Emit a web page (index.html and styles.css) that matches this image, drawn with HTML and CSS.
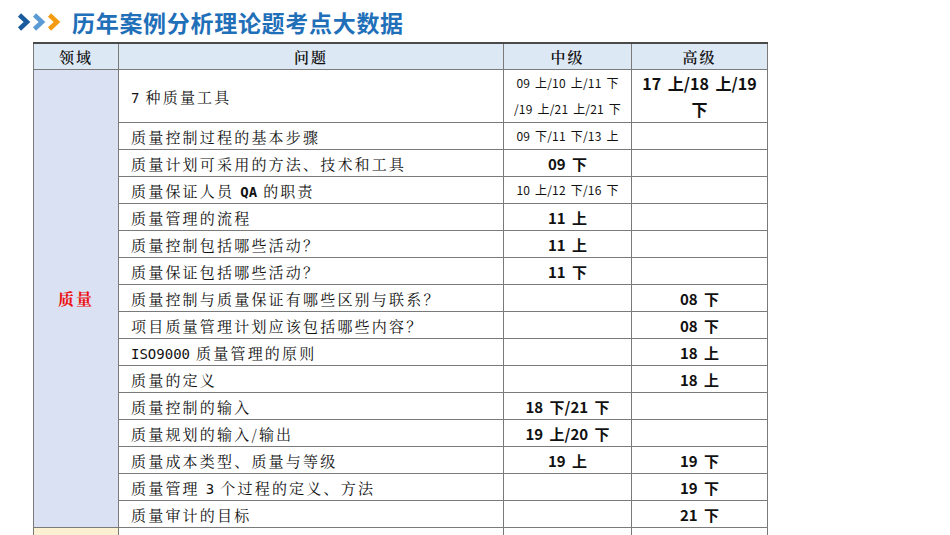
FILE: index.html
```html
<!DOCTYPE html>
<html lang="zh">
<head>
<meta charset="utf-8">
<link rel="stylesheet" href="styles.css">
</head>
<body>
<div class="page">
  <div class="title">
    <svg class="arrows" width="46" height="18" viewBox="0 0 46 18">
      <path d="M2.5 2 L10 9 L2.5 16" fill="none" stroke="#1b5a9c" stroke-width="4.5" />
      <path d="M17.5 2 L25 9 L17.5 16" fill="none" stroke="#5b9bd5" stroke-width="4.5" />
      <path d="M32.5 2 L40 9 L32.5 16" fill="none" stroke="#f39c12" stroke-width="4.5" />
    </svg>
    <h1>历年案例分析理论题考点大数据</h1>
  </div>
  <table class="grid">
    <colgroup>
      <col class="c1"><col class="c2"><col class="c3"><col class="c4">
    </colgroup>
    <thead>
      <tr><th>领域</th><th>问题</th><th>中级</th><th>高级</th></tr>
    </thead>
    <tbody>
      <tr class="tall">
        <td class="area" rowspan="16">质量</td>
        <td class="q"><span class="lat">7</span> 种质量工具</td>
        <td class="small">09 上/10 上/11 下<br>/19 上/21 上/21 下</td>
        <td class="big">17 上/18 上/19<br>下</td>
      </tr>
      <tr><td class="q">质量控制过程的基本步骤</td><td class="small">09 下/11 下/13 上</td><td></td></tr>
      <tr><td class="q">质量计划可采用的方法、技术和工具</td><td class="num">09 下</td><td></td></tr>
      <tr><td class="q">质量保证人员 <span class="lat b">QA</span> 的职责</td><td class="small">10 上/12 下/16 下</td><td></td></tr>
      <tr><td class="q">质量管理的流程</td><td class="num">11 上</td><td></td></tr>
      <tr><td class="q">质量控制包括哪些活动？</td><td class="num">11 上</td><td></td></tr>
      <tr><td class="q">质量保证包括哪些活动？</td><td class="num">11 下</td><td></td></tr>
      <tr><td class="q">质量控制与质量保证有哪些区别与联系？</td><td></td><td class="num">08 下</td></tr>
      <tr><td class="q">项目质量管理计划应该包括哪些内容？</td><td></td><td class="num">08 下</td></tr>
      <tr><td class="q"><span class="lat">ISO9000</span> 质量管理的原则</td><td></td><td class="num">18 上</td></tr>
      <tr><td class="q">质量的定义</td><td></td><td class="num">18 上</td></tr>
      <tr><td class="q">质量控制的输入</td><td class="num">18 下/21 下</td><td></td></tr>
      <tr><td class="q">质量规划的输入/输出</td><td class="num">19 上/20 下</td><td></td></tr>
      <tr><td class="q">质量成本类型、质量与等级</td><td class="num">19 上</td><td class="num">19 下</td></tr>
      <tr><td class="q">质量管理 <span class="lat">3</span> 个过程的定义、方法</td><td></td><td class="num">19 下</td></tr>
      <tr><td class="q">质量审计的目标</td><td></td><td class="num">21 下</td></tr>
      <tr class="next"><td class="area2"></td><td class="q"></td><td></td><td></td></tr>
    </tbody>
  </table>
</div>
</body>
</html>
```

FILE: styles.css
```css
html, body {
  margin: 0;
  padding: 0;
  background: #ffffff;
  overflow: hidden;
}
.page {
  width: 950px;
  height: 535px;
  overflow: hidden;
  font-family: "Noto Sans CJK SC", sans-serif;
  color: #111;
}
.title {
  display: flex;
  align-items: center;
  height: 42px;
  padding-left: 17px;
  box-sizing: border-box;
  padding-top: 2px;
}
.arrows {
  flex: none;
  margin-right: 9px;
}
.title h1 {
  margin: 0;
  font-size: 23px;
  line-height: 30px;
  font-weight: 700;
  color: #1f6fb9;
  letter-spacing: 0.7px;
}
.grid {
  margin-left: 33px;
  border-collapse: collapse;
  table-layout: fixed;
  width: 734px;
}
.c1 { width: 85px; }
.c2 { width: 385px; }
.c3 { width: 128px; }
.c4 { width: 136px; }
.grid th, .grid td {
  border: 1px solid #7a7a7a;
  padding: 0;
  height: 26px;
  text-align: center;
  vertical-align: middle;
}
.grid thead th {
  background: #dde8f5;
  font-family: "Noto Serif CJK SC", "Noto Sans CJK SC", serif;
  font-size: 15px;
  font-weight: 600;
  border-top: 2px solid #4a4a4a;
  letter-spacing: 2px;
  height: 25px;
}
.grid td.area {
  background: #d9e1f3;
  color: #ee1111;
  font-family: "Noto Serif CJK SC", "Noto Sans CJK SC", serif;
  font-weight: 700;
  font-size: 16px;
  letter-spacing: 2px;
}
.grid td.area2 {
  background: #fcf0d2;
}
.grid td.q {
  text-align: left;
  padding-left: 12px;
  font-family: "Noto Serif CJK SC", "Noto Sans CJK SC", serif;
  font-size: 15px;
  letter-spacing: 2.2px;
  white-space: nowrap;
}
.grid td.q .lat {
  font-family: "DejaVu Sans Mono", "Liberation Mono", monospace;
  font-size: 14px;
  letter-spacing: 0;
}
.grid td.q .lat.b {
  font-weight: 700;
}
.grid tr.tall td {
  height: 52px;
}
.grid td.small {
  font-size: 12px;
  line-height: 26px;
  letter-spacing: 0.2px;
  word-spacing: 2px;
}
.grid td.num {
  font-size: 15px;
  font-weight: 700;
  word-spacing: 3px;
}
.grid td.big {
  font-size: 16px;
  font-weight: 700;
  line-height: 26px;
  word-spacing: 3px;
}
.grid tr.next td {
  height: 20px;
}
```
